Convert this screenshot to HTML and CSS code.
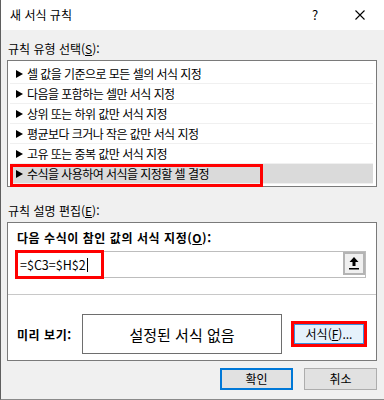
FILE: index.html
```html
<!DOCTYPE html>
<html lang="ko">
<head>
    <meta charset="UTF-8">
    <meta name="viewport" content="width=device-width, initial-scale=1.0">
    <title>새 서식 규칙</title>
    <link rel="stylesheet" href="styles.css">
</head>
<body>
    <div class="dialog">
        <div class="titlebar">
            <span class="title">새 서식 규칙</span>
            <span class="help">?</span>
            <span class="close">
                <svg width="10" height="10" viewBox="0 0 10 10">
                    <path d="M0.5 0.5 L9.5 9.5 M9.5 0.5 L0.5 9.5" stroke="#000" stroke-width="1.1" fill="none"/>
                </svg>
            </span>
        </div>
        <div class="content">
            <div class="label">규칙 유형 선택(<u>S</u>):</div>
            <ul class="rule-list">
                <li>셀 값을 기준으로 모든 셀의 서식 지정</li>
                <li>다음을 포함하는 셀만 서식 지정</li>
                <li>상위 또는 하위 값만 서식 지정</li>
                <li>평균보다 크거나 작은 값만 서식 지정</li>
                <li>고유 또는 중복 값만 서식 지정</li>
                <li class="selected">수식을 사용하여 서식을 지정할 셀 결정</li>
            </ul>
            <div class="label label-gap">규칙 설명 편집(<u>E</u>):</div>
            <div class="desc">
                <div class="desc-title">다음 수식이 참인 값의 서식 지정(<u>O</u>):</div>
                <div class="formula">
                    <span class="formula-text">=$C3=$H$2</span>
                    <span class="caret"></span>
                    <span class="collapse-btn">
                        <svg width="10" height="13" viewBox="0 0 10 13">
                            <path d="M5 0 L9.5 5 H6.5 V9 H3.5 V5 H0.5 Z" fill="#000"/>
                            <rect x="0" y="11" width="10" height="1.5" fill="#000"/>
                        </svg>
                    </span>
                </div>
                <div class="preview-row">
                    <span class="preview-label">미리 보기:</span>
                    <div class="preview-box">설정된 서식 없음</div>
                    <button class="format-btn">서식(<u>F</u>)...</button>
                </div>
            </div>
            <div class="actions">
                <button class="btn btn-default">확인</button>
                <button class="btn">취소</button>
            </div>
        </div>
    </div>
</body>
</html>
```

FILE: styles.css
```css
body {
    margin: 0;
    font-family: "Noto Sans CJK KR", "Noto Sans", sans-serif;
    font-size: 12px;
    color: #000;
    background-color: #f0f0f0;
}
.dialog {
    width: 383px;
    height: 399px;
    border-left: 1px solid #5f5f5f;
    border-bottom: 1px solid #8a8a8a;
    background-color: #f0f0f0;
}
.titlebar {
    height: 30px;
    background-color: #fff;
    display: flex;
    align-items: center;
    padding-left: 9px;
}
.title {
    line-height: 16px;
}
.help {
    margin-left: auto;
    width: 12px;
    text-align: center;
    font-size: 13px;
    line-height: 16px;
}
.close {
    width: 10px;
    height: 10px;
    margin: 0 19px 0 34px;
    display: flex;
}
.content {
    padding: 0 7px 0 6px;
    overflow: hidden;
}
.label {
    margin-top: 11px;
    height: 16px;
    line-height: 16px;
    padding-left: 1px;
}
.label-gap {
    margin-top: 16px;
}
.rule-list {
    list-style: none;
    margin: 3px 0 0;
    padding: 3px 3px 2px 2px;
    background-color: #fff;
    border: 1px solid #7a7a7a;
}
.rule-list li {
    height: 19px;
    line-height: 19px;
    border-bottom: 1px solid #f0f0f0;
    display: flex;
    align-items: center;
    white-space: nowrap;
    letter-spacing: -0.55px;
}
.rule-list li::before {
    content: "";
    border-left: 7px solid #000;
    border-top: 4px solid transparent;
    border-bottom: 4px solid transparent;
    margin: 1px 4px 0 6px;
}
.rule-list li.selected {
    background-color: #dadada;
    position: relative;
}
.rule-list li.selected::after {
    content: "";
    position: absolute;
    left: 0;
    top: 0;
    width: 253px;
    height: 23px;
    border: 3px solid #f00;
    box-sizing: border-box;
}
.desc {
    margin-top: 3px;
    background-color: #fff;
    border: 1px solid #7a7a7a;
}
.desc-title {
    padding: 6px 0 0 9px;
    line-height: 17px;
    font-weight: bold;
    letter-spacing: 0.55px;
}
.formula {
    margin: 5px 10px 0 7px;
    height: 25px;
    border: 1px solid #bdbdbd;
    display: flex;
    align-items: center;
    padding-left: 4px;
    position: relative;
}
.formula::before {
    content: "";
    position: absolute;
    left: -1px;
    top: -2px;
    width: 89px;
    height: 29px;
    border: 3px solid #f00;
    box-sizing: border-box;
}
.formula-text {
    font-size: 12.5px;
    line-height: 18px;
}
.caret {
    width: 1px;
    height: 14px;
    background-color: #000;
    margin-left: 1px;
}
.collapse-btn {
    margin-left: auto;
    align-self: flex-start;
    width: 22px;
    height: 23px;
    box-sizing: border-box;
    border: 2px solid #b4b4b4;
    background-color: #f0f0f0;
    display: flex;
    align-items: center;
    justify-content: center;
}
.preview-row {
    margin-top: 16px;
    border-top: 1px solid #c8c8c8;
    padding: 19px 0 6px 9px;
    display: flex;
    align-items: center;
}
.preview-label {
    width: 65px;
    font-weight: bold;
    line-height: 17px;
    letter-spacing: 0.55px;
}
.preview-box {
    width: 200px;
    height: 40px;
    box-sizing: border-box;
    border: 1px solid #6e6e6e;
    display: flex;
    align-items: center;
    justify-content: center;
    font-size: 15px;
}
.format-btn {
    margin-left: 12px;
    width: 70px;
    height: 20px;
    padding: 0;
    box-sizing: border-box;
    border: 1px solid #3c8fdc;
    background-color: #e5f1fb;
    outline: 3px solid #f00;
    font-family: inherit;
    font-size: 12px;
    line-height: 16px;
    color: #000;
}
.actions {
    margin-top: 7px;
    display: flex;
    justify-content: flex-end;
    gap: 11px;
}
.btn {
    width: 73px;
    height: 22px;
    padding: 0;
    box-sizing: border-box;
    border: 1px solid #adadad;
    background-color: #e1e1e1;
    font-family: inherit;
    font-size: 12px;
    line-height: 16px;
    color: #000;
}
.btn-default {
    border: 2px solid #0078d7;
}
```
